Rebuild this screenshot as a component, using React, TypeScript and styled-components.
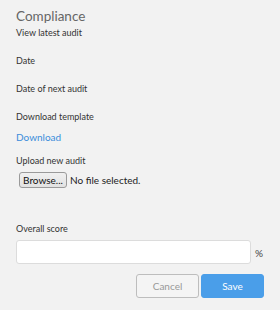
import React from 'react';
import styled, { createGlobalStyle } from 'styled-components';

const GlobalStyle = createGlobalStyle`
  html, body {
    margin: 0;
    padding: 0;
    background: #f2f2f2;
  }
  body {
    font-family: Lato, 'Open Sans', sans-serif;
  }
`;

const Page = styled.div`
  width: 280px;
  height: 310px;
  box-sizing: border-box;
  padding: 6px 16px 0 16px;
  display: flex;
  flex-direction: column;
`;

const Title = styled.h2`
  margin: 0 0 1px 0;
  font-size: 13.5px;
  line-height: 20px;
  font-weight: 400;
  color: #666;
`;

const Field = styled.div<{ $gap?: number }>`
  display: flex;
  flex-direction: column;
  min-height: 28px;
  margin-bottom: ${({ $gap }) => $gap ?? 0}px;
`;

const Label = styled.div`
  font-size: 9px;
  line-height: 12px;
  color: #333;
`;

const Link = styled.a`
  margin-top: 8px;
  font-size: 10px;
  line-height: 12px;
  color: #3a8ddb;
  text-decoration: none;
  cursor: pointer;
`;

const FileRow = styled.div`
  display: flex;
  align-items: center;
  gap: 3px;
  margin-top: 5px;
  margin-left: 3px;
`;

const BrowseButton = styled.button`
  width: 48px;
  height: 16px;
  padding: 0;
  font-family: inherit;
  font-size: 10px;
  line-height: 14px;
  color: #111;
  background: linear-gradient(#f0f0f0, #e2e2e2);
  border: 1px solid #9a9a9a;
  border-radius: 3px;
`;

const FileText = styled.span`
  font-size: 10px;
  color: #222;
`;

const InputRow = styled.div`
  display: flex;
  align-items: center;
  gap: 4px;
  margin-top: 5px;
`;

const ScoreInput = styled.input`
  flex: 1;
  min-width: 0;
  height: 24px;
  box-sizing: border-box;
  border: 1px solid #dcdcdc;
  border-radius: 3px;
  background: #fff;
  outline: none;
`;

const Unit = styled.span`
  width: 9px;
  font-size: 10px;
  color: #444;
  padding-top: 2px;
`;

const Actions = styled.div`
  display: flex;
  justify-content: flex-end;
  gap: 2px;
  margin-top: 10px;
`;

const Button = styled.button<{ $primary?: boolean }>`
  width: 63px;
  height: 24px;
  box-sizing: border-box;
  font-family: inherit;
  font-size: 10px;
  border-radius: 3px;
  border: 1px solid ${({ $primary }) => ($primary ? '#4a9ee9' : '#bdbdbd')};
  background: ${({ $primary }) => ($primary ? '#4a9ee9' : '#f4f4f4')};
  color: ${({ $primary }) => ($primary ? '#fff' : '#999')};
`;

export default function App() {
  return (
    <>
      <GlobalStyle />
      <Page>
        <Title>Compliance</Title>
        <Field>
          <Label>View latest audit</Label>
        </Field>
        <Field>
          <Label>Date</Label>
        </Field>
        <Field>
          <Label>Date of next audit</Label>
        </Field>
        <Field $gap={12}>
          <Label>Download template</Label>
          <Link>Download</Link>
        </Field>
        <Field $gap={35}>
          <Label>Upload new audit</Label>
          <FileRow>
            <BrowseButton>Browse...</BrowseButton>
            <FileText>No file selected.</FileText>
          </FileRow>
        </Field>
        <Field>
          <Label>Overall score</Label>
          <InputRow>
            <ScoreInput />
            <Unit>%</Unit>
          </InputRow>
        </Field>
        <Actions>
          <Button>Cancel</Button>
          <Button $primary>Save</Button>
        </Actions>
      </Page>
    </>
  );
}
